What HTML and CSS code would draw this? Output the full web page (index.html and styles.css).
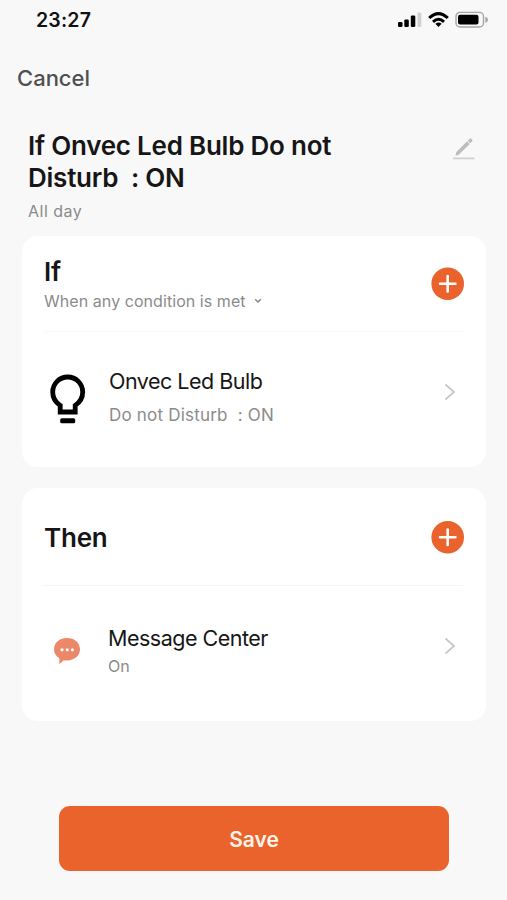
FILE: index.html
```html
<!DOCTYPE html>
<html lang="en">
<head>
<meta charset="utf-8">
<title>Edit scene</title>
<link rel="stylesheet" href="styles.css">
</head>
<body>
<main class="screen">
  <header class="status">
    <span class="clock">23:27</span>
    <svg class="status-icons" width="92" height="18" viewBox="0 0 92 18">
      <rect x="0" y="11" width="4.500" height="5" rx="1.200"/>
      <rect x="6.300" y="8.500" width="4.500" height="7.500" rx="1.200"/>
      <rect x="12.800" y="4.500" width="4.500" height="11.500" rx="1.200"/>
      <rect x="19.500" y="1.500" width="3.800" height="14.500" rx="1" fill="#d0d0d0"/>
      <g fill="none" stroke="#000" stroke-width="3">
        <path d="M31.200 7Q40.500 -1.800 49.800 7"/>
        <path d="M35 10.800Q40.500 5.800 46 10.800"/>
      </g>
      <path d="M37.400 12.700Q40.500 10.500 43.600 12.700L40.500 16Z"/>
      <rect x="58" y="1.400" width="27.500" height="14.600" rx="4" fill="none" stroke="#a5a5a5" stroke-width="1.400"/>
      <rect x="60" y="3.800" width="20.500" height="9.800" rx="2"/>
      <path d="M87.300 5.700Q90 6.200 90 8.700T87.300 11.700Z" fill="#a5a5a5"/>
    </svg>
  </header>
  <nav class="nav"><span class="cancel">Cancel</span></nav>
  <section class="heading">
    <div>
      <h1 class="title">If Onvec Led Bulb Do not<br>Disturb&nbsp; : ON</h1>
      <p class="schedule">All day</p>
    </div>
    <svg class="edit" width="24" height="24" viewBox="0 0 24 24">
      <path d="M3.500 18.700L4.200 15.200L15.100 4.300L17.700 6.900L6.800 17.800ZM15.700 3.700L17.700 1.700Q18.500 1 19.300 1.800L20.200 2.700Q21 3.500 20.300 4.300L18.300 6.300Z" fill="#bdbdbd"/>
      <path d="M1 21.400H22.500" stroke="#cecece" stroke-width="1.700"/>
    </svg>
  </section>
  <section class="card">
    <div class="card-head if-head">
      <div>
        <h2 class="card-title">If</h2>
        <p class="condition">When any condition is met
          <svg width="8" height="6" viewBox="0 0 8 6"><path d="M1.200 1.200L4 4L6.800 1.200" fill="none" stroke="#888" stroke-width="1.500"/></svg>
        </p>
      </div>
      <svg class="add" width="34" height="34" viewBox="0 0 34 34"><circle cx="16.700" cy="16.700" r="16.300" fill="#ea632d"/><path d="M16.700 9V24.400M9 16.700H24.400" stroke="#fff" stroke-width="2.600" stroke-linecap="round"/></svg>
    </div>
    <div class="row">
      <svg class="bulb" width="36" height="50" viewBox="0 0 36 50">
        <path d="M10.200 38V31.400Q2.700 26.500 2.700 18A15 15 0 0 1 32.700 18Q32.700 26.500 25.200 31.400V38Z" fill="none" stroke="#000" stroke-width="4.800"/>
        <rect x="10.200" y="44.200" width="15" height="5" rx="1.500"/>
      </svg>
      <div class="row-text">
        <h3 class="name">Onvec Led Bulb</h3>
        <p class="detail bulb-detail">Do not Disturb&nbsp; : ON</p>
      </div>
      <svg class="chevron" width="12" height="18" viewBox="0 0 12 18"><path d="M1.500 1.500L10 9L1.500 16.500" fill="none" stroke="#c6c6c6" stroke-width="1.700"/></svg>
    </div>
  </section>
  <section class="card then-card">
    <div class="card-head then-head">
      <h2 class="card-title">Then</h2>
      <svg class="add" width="34" height="34" viewBox="0 0 34 34"><circle cx="16.700" cy="17.200" r="16.300" fill="#ea632d"/><path d="M16.700 9.500V24.900M9 17.200H24.400" stroke="#fff" stroke-width="2.600" stroke-linecap="round"/></svg>
    </div>
    <div class="row">
      <svg class="message" width="28" height="28" viewBox="0 0 28 28">
        <path d="M14 1C21.300 1 27 5.800 27 12.300S21.300 23.500 14 23.500Q11.800 23.500 10.200 23.500Q8.500 25.700 6 27Q6.900 24.200 6.200 21.300Q1 18 1 12.300C1 5.800 6.700 1 14 1Z" fill="#ec8768"/>
        <g fill="#fff"><circle cx="9" cy="12.800" r="1.600"/><circle cx="14.200" cy="12.800" r="1.600"/><circle cx="19.400" cy="12.800" r="1.600"/></g>
      </svg>
      <div class="row-text message-text">
        <h3 class="name">Message Center</h3>
        <p class="detail message-detail">On</p>
      </div>
      <svg class="chevron" width="12" height="18" viewBox="0 0 12 18"><path d="M1.500 1.500L10 9L1.500 16.500" fill="none" stroke="#c6c6c6" stroke-width="1.700"/></svg>
    </div>
  </section>
  <button class="save">Save</button>
</main>
</body>
</html>
```
FILE: styles.css
```css
* { box-sizing: border-box; }
body { margin: 0; background: #f8f8f8; font-family: Inter, "Liberation Sans", sans-serif; color: #161616; }
h1, h2, h3, p { margin: 0; }
svg { flex: none; }
.screen { height: 900px; padding: 0 21px 0 22px; overflow: hidden; }
.status { height: 40px; margin-right: -4px; padding-left: 14px; display: flex; justify-content: space-between; align-items: center; }
.clock { font-size: 19.500px; font-weight: 600; letter-spacing: .2px; color: #111; }
.status-icons { margin-right: 0; }
.nav { height: 76px; display: flex; align-items: center; margin-left: -5px; }
.cancel { font-size: 22px; font-weight: 500; color: #505050; }
.heading { height: 120px; padding: 14px 10px 0 6px; display: flex; justify-content: space-between; align-items: flex-start; }
.title { font-size: 26px; line-height: 32px; font-weight: 600; letter-spacing: -.23px; white-space: nowrap; }
.schedule { margin-top: 7px; font-size: 16px; line-height: 20px; letter-spacing: .5px; color: #8b8b8b; }
.edit { margin-top: 7px; }
.card { height: 231px; border-radius: 16px; background: #fff; padding: 0 21px; }
.then-card { height: 233px; margin-top: 21px; }
.card-head { display: flex; justify-content: space-between; align-items: center; border-bottom: 1px solid #f4f4f4; margin-right: 2px; padding-left: 1px; }
.if-head { height: 96px; border-color: #f9f9f9; }
.then-head { height: 98px; }
.card-title { font-size: 26px; line-height: 32px; font-weight: 600; letter-spacing: -.2px; }
.then-head .card-title { padding-top: 2px; }
.condition { font-size: 16px; line-height: 20px; margin-top: 3px; letter-spacing: .06px; color: #8b8b8b; display: flex; align-items: center; gap: 8px; }
.add { margin-right: -2px; }
.row { height: 134px; padding: 0 9px 0 7px; display: flex; align-items: center; }
.row-text { flex: 1; margin: -5px 0 0 23px; }
.message-text { margin: -5px 0 0 27px; }
.name { font-size: 21.500px; line-height: 28px; font-weight: 400; letter-spacing: -.5px; }
.detail { font-size: 17px; line-height: 22px; color: #8b8b8b; }
.bulb-detail { margin-top: 9px; letter-spacing: .2px; }
.chevron { margin-bottom: 14px; }
.message { margin-left: 3px; margin-bottom: 4px; }
.message-detail { font-size: 16px; margin-top: 3px; }
.save { display: block; width: 390px; height: 65px; margin: 85px 0 0 37px; padding: 2px 0 0; border: 0; border-radius: 11px; background: #ea632d; color: #fff4e8; font: 600 21px Inter, sans-serif; }
```
